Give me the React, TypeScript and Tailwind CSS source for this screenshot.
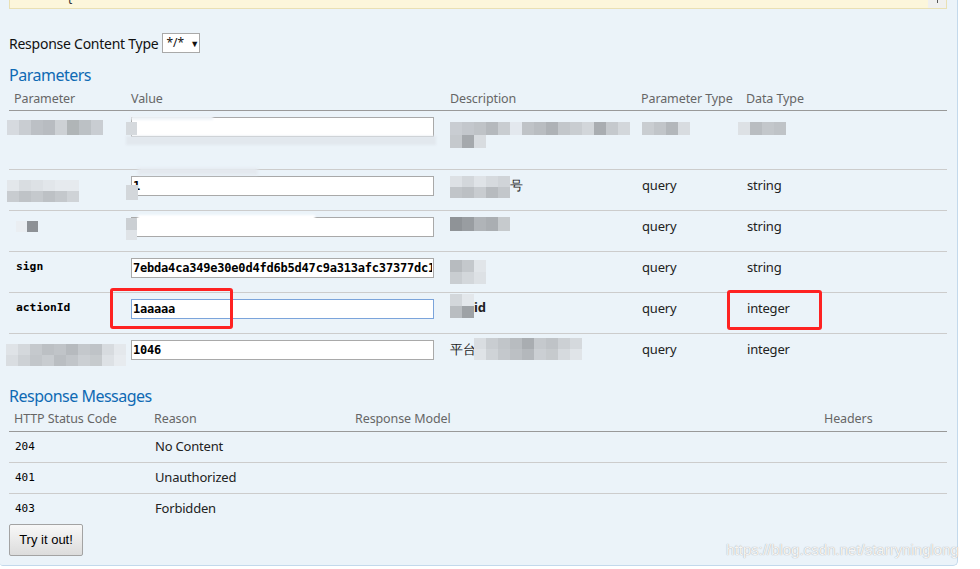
import React from "react";

type Rows = string[][];

// pixelated blur patches that hide private text in the screenshot
function Mosaic({ rows, cell = 12, h = 12, className = "" }: { rows: Rows; cell?: number; h?: number; className?: string }) {
  return (
    <span className={`inline-flex flex-col blur-[0.4px] ${className}`}>
      {rows.map((r, i) => (
        <span key={i} className="flex">
          {r.map((c, j) => (
            <span key={j} style={{ background: c, width: cell, height: h }} />
          ))}
        </span>
      ))}
    </span>
  );
}

function Field({ value = "", focus = false, children }: { value?: string; focus?: boolean; children?: React.ReactNode }) {
  return (
    <div className="relative w-[303px] h-[20px]">
      <input
        readOnly
        value={value}
        className={`block w-[303px] h-[20px] bg-white border ${
          focus ? "border-[#7ba4db]" : "border-[#a9a9a9]"
        } px-[1px] font-['DejaVu_Sans_Mono',monospace] font-bold text-[12px] text-black outline-none`}
      />
      {children}
    </div>
  );
}

function ParamRow({
  name,
  value,
  desc,
  ptype,
  dtype,
  h,
  last = false,
}: {
  name: React.ReactNode;
  value: React.ReactNode;
  desc: React.ReactNode;
  ptype: React.ReactNode;
  dtype: React.ReactNode;
  h: string;
  last?: boolean;
}) {
  return (
    <div
      className={`grid grid-cols-[117px_319px_191px_105px_206px] ${h} ${
        last ? "" : "border-b border-[#cccccc]"
      } text-[13px] tracking-[-0.2px] text-[#222]`}
    >
      <div className="pl-[7px] pt-[6px] leading-[20px]">{name}</div>
      <div className="pl-[5px] pt-[6px]">{value}</div>
      <div className="pl-[5px] pt-[6px] leading-[18px]">{desc}</div>
      <div className="pl-[6px] pt-[5px] leading-[20px]">{ptype}</div>
      <div className="pl-[6px] pt-[5px] leading-[20px]">{dtype}</div>
    </div>
  );
}

const mono = "font-['DejaVu_Sans_Mono',monospace]";

function Code({ children }: { children: React.ReactNode }) {
  return <div className={`-mt-[1px] ${mono} font-bold text-[11.3px] tracking-normal text-black`}>{children}</div>;
}

const responses = [
  { code: "204", reason: "No Content" },
  { code: "401", reason: "Unauthorized" },
  { code: "403", reason: "Forbidden" },
];

export default function App() {
  return (
    <div className="relative w-[980px] h-[569px] overflow-hidden bg-white font-['Noto_Sans',sans-serif]">
      <div className="w-[958px] h-[566px] bg-[#ebf3f9] border-r border-b border-[#c3d9ec] rounded-br-[5px] rounded-bl-[3px] pl-[9px] flex flex-col">
        {/* tail of the model box above */}
        <div className="w-[938px] h-[9px] flex bg-[#fcf6db] border-x border-b border-[#e9e0b4] overflow-hidden">
          <span className={`ml-[56px] -mt-[9px] text-[12px] leading-[14px] text-[#333] ${mono}`}>{"{"}</span>
          <div className="ml-auto w-[18px] h-full bg-[#f0f0ef] flex justify-center">
            <span className="w-[1px] h-[3px] bg-[#555]" />
          </div>
        </div>

        <div className="mt-[24px] h-[20px] flex items-center gap-[4px] text-[14px] tracking-[-0.25px] text-[#111]">
          <span>Response Content Type</span>
          <div className="w-[38px] h-[20px] bg-white border border-[#a9a9a9] flex items-center pl-[3px] gap-[6px] tracking-normal">
            <span className="text-[12px] leading-none">*/*</span>
            <span className="text-[9px] leading-none">▼</span>
          </div>
        </div>

        <h4 className="mt-[12px] h-[20px] text-[16px] leading-[20px] tracking-[-0.5px] text-[#0f6ab4]">Parameters</h4>

        <div className="w-[938px] mt-[3px]">
          <div className="grid grid-cols-[117px_319px_191px_105px_206px] h-[23px] items-center border-b border-[#999999] text-[12.5px] tracking-[-0.1px] text-[#666]">
            <div className="pl-[5px]">Parameter</div>
            <div className="pl-[5px]">Value</div>
            <div className="pl-[5px]">Description</div>
            <div className="pl-[5px]">Parameter Type</div>
            <div className="pl-[5px]">Data Type</div>
          </div>

          <ParamRow
            h="h-[59px]"
            name={<Mosaic className="-ml-[9px] mt-[3px]" h={15} rows={[["#d6dadf", "#c9cdd2", "#bcc0c5", "#b8bcc1", "#cdd1d5", "#b0b5b7", "#bcc1c5", "#c9cdd2"]]} />}
            value={
              <Field>
                <span className="absolute -left-[5px] top-[5px] w-[11px] h-[13px] bg-[#d5d9dd] blur-[0.4px]" />
                <span className="absolute left-0 -top-[1px] w-[82px] h-[4px] bg-[#eef3f8] blur-[1px]" />
                <span className="absolute -left-[5px] top-[19px] w-[310px] h-[9px] bg-[#e2e8ee] blur-[1px]" />
              </Field>
            }
            desc={
              <div className="flex flex-col mt-[5px]">
                <Mosaic rows={[["#c9cdd2", "#c3c7cc", "#bfc3c7", "#b5b9bd", "#c9cdd1", "#e3e8ee", "#bfc3c7", "#b9bdc1", "#aeb2b6", "#c3c7cb", "#c9cdd1", "#d2d6da", "#a9adb1", "#c5c9cd", "#d3d7db"]]} h={13} />
                <Mosaic rows={[["#c5c9cd", "#a5a9ad", "#d8dce0"]]} h={13} />
              </div>
            }
            ptype={<Mosaic className="mt-[6px]" h={13} rows={[["#c9cdd1", "#c1c5c9", "#b3b7bb", "#d8dce0"]]} />}
            dtype={<Mosaic className="-ml-[9px] mt-[6px]" h={13} rows={[["#dde1e5", "#b9bdc1", "#c3c7cb", "#bfc3c7"]]} />}
          />

          <ParamRow
            h="h-[41px]"
            name={
              <Mosaic
                className="-ml-[9px] -mt-[4px]"
                h={11}
                rows={[
                  ["#e3e7eb", "#d9dde1", "#dde1e5", "#e2e6ea", "#e6eaee", "#e6eaee"],
                  ["#c8ccd0", "#bfc3c7", "#c5c9cd", "#bdc1c5", "#c4c8cc", "#cfd3d7"],
                ]}
              />
            }
            value={
              <Field value="1">
                <span className="absolute -left-[5px] top-[9px] w-[12px] h-[15px] bg-[#d3d7db] blur-[0.4px]" />
                <span className="absolute left-[7px] -top-[8px] w-[120px] h-[7px] bg-[#e4e9ef] blur-[1.5px]" />
              </Field>
            }
            desc={
              <div className="flex items-start">
                <Mosaic
                  h={11}
                  rows={[
                    ["#dde1e5", "#d3d7db", "#dfe3e7", "#d6dade", "#d0d4d8"],
                    ["#c1c5c9", "#bcc0c4", "#c8ccd0", "#b7bbbf", "#c3c7cb"],
                  ]}
                />
                <span className="leading-[18px]">号</span>
              </div>
            }
            ptype="query"
            dtype="string"
          />

          <ParamRow
            h="h-[41px]"
            name={<Mosaic className="mt-[3px]" h={11} cell={11} rows={[["#eaeef2", "#8d9196"]]} />}
            value={
              <Field>
                <span className="absolute -left-[5px] top-[1px] w-[11px] h-[12px] bg-[#cbcfd3] blur-[0.4px]" />
                <span className="absolute -left-[5px] top-[13px] w-[11px] h-[10px] bg-[#dfe3e7] blur-[0.4px]" />
                <span className="absolute left-[7px] -top-[2px] w-[177px] h-[6px] bg-white blur-[0.8px]" />
              </Field>
            }
            desc={<Mosaic h={14} rows={[["#8f9397", "#999da1", "#b0b4b8", "#aaaeb2", "#c6cacd"]]} />}
            ptype="query"
            dtype="string"
          />

          <ParamRow
            h="h-[41px]"
            name={<Code>sign</Code>}
            value={<Field value="7ebda4ca349e30e0d4fd6b5d47c9a313afc37377dc1a" />}
            desc={
              <Mosaic
                className="-mt-[4px]"
                h={12}
                rows={[
                  ["#b7bbbf", "#c4c8cc", "#e1e5e9"],
                  ["#c9cdd1", "#d3d7db", "#dde1e5"],
                ]}
              />
            }
            ptype="query"
            dtype="string"
          />

          <ParamRow
            h="h-[41px]"
            name={<Code>actionId</Code>}
            value={<Field value="1aaaaa" focus />}
            desc={
              <div className="flex items-start">
                <Mosaic
                  className="-mt-[5px]"
                  h={12}
                  rows={[
                    ["#d3d7db", "#e3e7eb"],
                    ["#b9bdc1", "#9ea2a6"],
                  ]}
                />
                <span className="font-bold leading-[16px]">id</span>
              </div>
            }
            ptype="query"
            dtype="integer"
          />

          <ParamRow
            h="h-[40px]"
            last
            name={
              <Mosaic
                className="-ml-[10px] mt-[-2px]"
                h={11}
                rows={[
                  ["#dfe3e7", "#d4d8dc", "#c5c9cd", "#bcc0c4", "#c0c4c8", "#b6babe", "#c4c8cc", "#bfc3c7", "#d7dbdf", "#e4e8ec"],
                  ["#d9dde1", "#cdd1d5", "#c2c6ca", "#c8ccd0", "#babec2", "#c1c5c9", "#cbcfd3", "#c6cacd", "#dde1e5", "#e7ebef"],
                ]}
              />
            }
            value={<Field value="1046" />}
            desc={
              <div className="flex items-start">
                <span className="leading-[18px]">平台</span>
                <Mosaic
                  className="-ml-[2px] -mt-[2px]"
                  h={11}
                  rows={[
                    ["#d9dde1", "#c9cdd1", "#c1c5c9", "#b8bcc0", "#a9adb1", "#c5c9cd", "#bfc3c7", "#ccd0d4", "#d5d9dd"],
                    ["#dfe3e7", "#cfd3d7", "#c4c8cc", "#bcc0c4", "#b4b8bc", "#cbcfd3", "#c6cacd", "#d6dade", "#e0e4e8"],
                  ]}
                />
              </div>
            }
            ptype="query"
            dtype="integer"
          />
        </div>

        <h4 className="mt-[12px] h-[20px] text-[16px] leading-[20px] tracking-[-0.5px] text-[#0f6ab4]">Response Messages</h4>

        <div className="w-[938px] mt-[2px]">
          <div className="grid grid-cols-[141px_200px_469px_128px] h-[24px] items-center border-b border-[#999999] text-[12.5px] tracking-[-0.1px] text-[#666]">
            <div className="pl-[5px]">HTTP Status Code</div>
            <div className="pl-[4px]">Reason</div>
            <div className="pl-[5px]">Response Model</div>
            <div className="pl-[5px]">Headers</div>
          </div>
          {responses.map((r, i) => (
            <div
              key={r.code}
              className={`grid grid-cols-[141px_200px_469px_128px] items-center text-[13px] tracking-[-0.2px] text-[#222] ${
                i < responses.length - 1 ? "h-[31px] border-b border-[#cccccc]" : "h-[30px]"
              }`}
            >
              <div className={`pl-[6px] ${mono} text-[11px] tracking-normal text-black`}>{r.code}</div>
              <div className="pl-[5px]">{r.reason}</div>
              <div />
              <div />
            </div>
          ))}
        </div>

        <button className="w-[74px] h-[32px] border border-[#a3a3a3] rounded-[2px] bg-gradient-to-b from-[#f8f8f8] to-[#dcdcdc] font-['Liberation_Sans',sans-serif] text-[13px] text-black">
          Try it out!
        </button>
      </div>

      {/* red annotation boxes */}
      <div className="absolute left-[110px] top-[288px] w-[123px] h-[41px] border-[3px] border-[#fe2222] rounded-[3px]" />
      <div className="absolute left-[727px] top-[290px] w-[95px] h-[40px] border-[3px] border-[#fe2222] rounded-[3px]" />

      {/* watermark */}
      <div className="absolute left-[726px] top-[539px] font-['Liberation_Sans',sans-serif] text-[15px] text-white/90 [text-shadow:0_0_1px_#8a8a8a]">
        https://blog.csdn.net/starryninglong
      </div>
    </div>
  );
}
